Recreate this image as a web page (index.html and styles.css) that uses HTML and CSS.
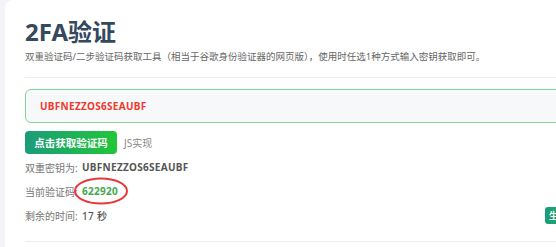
FILE: index.html
```html
<!DOCTYPE html>
<html lang="zh-CN">
<head>
    <meta charset="UTF-8">
    <meta name="viewport" content="width=device-width, initial-scale=1.0">
    <title>2FA验证</title>
    <link rel="stylesheet" href="styles.css">
</head>
<body>
    <main class="page">
        <section class="card">
            <h1>2FA验证</h1>
            <p class="desc">双重验证码/二步验证码获取工具（相当于谷歌身份验证器的网页版），使用时任选1种方式输入密钥获取即可。</p>
            <hr>
            <div class="secret-box">
                <span class="secret">UBFNEZZOS6SEAUBF</span>
            </div>
            <div class="actions">
                <button type="button" class="btn">点击获取验证码</button>
                <span class="note">JS实现</span>
            </div>
            <div class="result">
                <div class="rows">
                    <div class="row"><span class="label">双重密钥为:</span><span class="value">UBFNEZZOS6SEAUBF</span></div>
                    <div class="row">
                        <span class="label">当前验证码:</span>
                        <span class="value code">622920
                            <svg class="mark" width="56" height="30" viewBox="0 0 56 30"><ellipse cx="28" cy="15" rx="26" ry="12.5" fill="none" stroke="#e8383a" stroke-width="2"/></svg>
                        </span>
                    </div>
                    <div class="row"><span class="label">剩余的时间:</span><span class="value plain">17 秒</span></div>
                </div>
                <button type="button" class="btn btn-small">生成</button>
            </div>
            <hr class="bottom">
        </section>
    </main>
</body>
</html>
```

FILE: styles.css
```css
body {
    margin: 0;
    background-color: #f3f4f7;
    font-family: 'Noto Sans', 'Noto Sans CJK SC', sans-serif;
    color: #666;
    overflow: hidden;
}

.page {
    padding-left: 5px;
}

.card {
    width: 580px;
    background-color: #fff;
    border-radius: 8px 0 0 0;
    padding: 17px 20px 20px;
}

h1 {
    margin: 0;
    font-size: 24px;
    line-height: 30px;
    font-weight: 700;
    color: #34495e;
}

.desc {
    margin: 2px 0 0;
    font-size: 9.5px;
    line-height: 16px;
    color: #666;
    white-space: nowrap;
}

hr {
    border: none;
    height: 1px;
    background-color: #ececec;
    margin: 12px 0 0;
}

.secret-box {
    margin-top: 11px;
    height: 32px;
    display: flex;
    align-items: center;
    padding-left: 14px;
    background-color: #f7f8fa;
    border: 1px solid #82d692;
    border-radius: 6px;
}

.secret {
    font-size: 10px;
    font-weight: 700;
    color: #f03a2e;
    letter-spacing: 0.3px;
}

.actions {
    margin-top: 8px;
    display: flex;
    align-items: center;
    gap: 7px;
}

.btn {
    border: none;
    border-radius: 4px;
    color: #fff;
    font-family: inherit;
    font-weight: 700;
    cursor: pointer;
    background: linear-gradient(to right, #1b9c7a, #22c639);
}

.actions .btn {
    height: 23px;
    width: 92px;
    padding: 0;
    font-size: 10.5px;
}

.note {
    font-size: 10px;
    color: #888;
}

.result {
    margin-top: 1px;
    display: flex;
    justify-content: space-between;
    align-items: flex-end;
}

.row {
    height: 24px;
    display: flex;
    align-items: center;
    font-size: 10px;
}

.label {
    color: #777;
    width: 57px;
}

.value {
    font-weight: 700;
    color: #555;
    letter-spacing: 0.3px;
}

.value.plain {
    font-weight: 500;
}

.code {
    position: relative;
    color: #45a84f;
}

.mark {
    position: absolute;
    left: -9px;
    top: -8px;
}

.btn-small {
    height: 17px;
    width: 60px;
    padding: 0 0 0 4px;
    margin-bottom: 3px;
    font-size: 9px;
    text-align: left;
    border-radius: 3px;
}

.bottom {
    margin-top: 14px;
}
```
